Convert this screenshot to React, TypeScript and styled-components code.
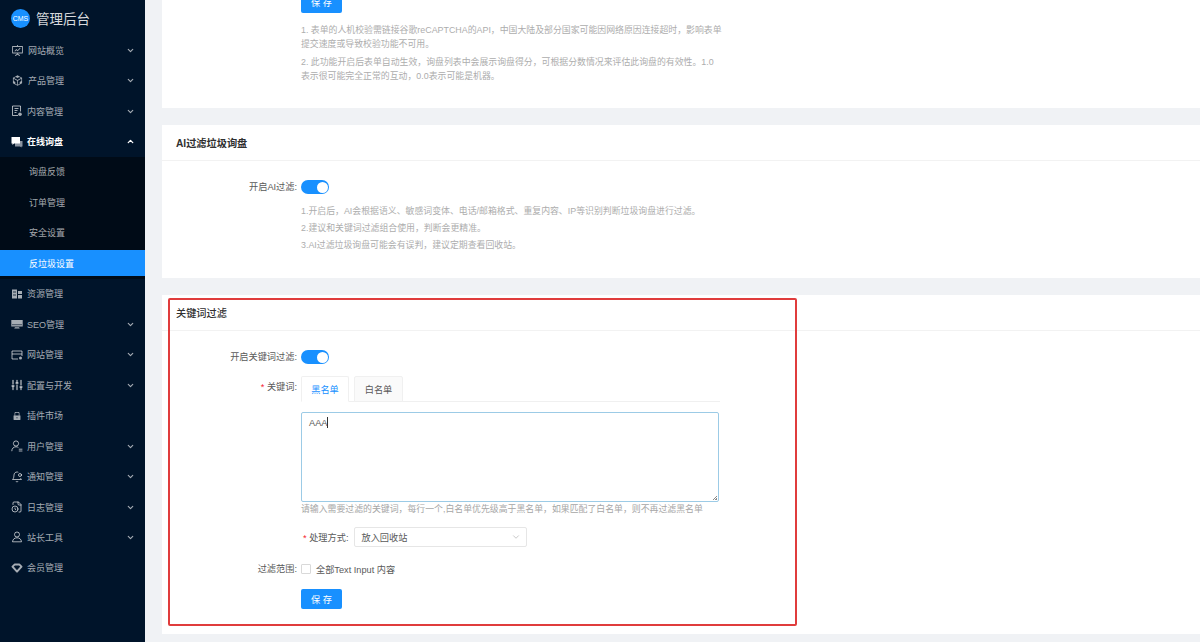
import React from 'react';
import styled, { createGlobalStyle } from 'styled-components';
import { AiFillLock, AiOutlineCodeSandbox, AiOutlineFundProjectionScreen } from 'react-icons/ai';
import { LuBellDot, LuChevronDown, LuChevronUp, LuFileClock, LuSlidersVertical } from 'react-icons/lu';

const GlobalStyle = createGlobalStyle`
  html, body {
    margin: 0;
    height: 642px;
    overflow: hidden;
    background: #f0f2f5;
    font-family: "Liberation Sans", "Noto Sans CJK SC", sans-serif;
    font-size: 9.2px;
    color: #595959;
  }
  * { box-sizing: border-box; }
`;

const Layout = styled.div`
  display: flex;
  width: 1200px;
  height: 642px;
  overflow: hidden;
  position: relative;
`;

const Sidebar = styled.aside`
  flex: 0 0 145px;
  background: #00142a;
  color: rgba(255, 255, 255, .65);
`;

const Logo = styled.div`
  display: flex;
  align-items: center;
  gap: 6px;
  height: 35px;
  padding: 1px 0 0 11px;
  color: rgba(255, 255, 255, .85);
  font-size: 13.5px;
`;

const LogoMark = styled.span`
  width: 19px;
  height: 19px;
  border-radius: 50%;
  background: #1890ff;
  color: #fff;
  font-size: 7px;
  display: flex;
  align-items: center;
  justify-content: center;
`;

const Menu = styled.nav`
  display: flex;
  flex-direction: column;
`;

const MenuItem = styled.div<{ $open?: boolean }>`
  height: 30.45px;
  display: flex;
  align-items: center;
  padding: 0 10px 0 11px;
  gap: 4px;
  font-size: 9px;
  color: ${p => (p.$open ? '#fff' : 'rgba(255, 255, 255, .65)')};
  font-weight: ${p => (p.$open ? 700 : 400)};
`;

const IconBox = styled.span`
  flex: 0 0 12px;
  height: 12px;
  display: flex;
  align-items: center;
  justify-content: center;
`;

const ItemLabel = styled.span`
  flex: 1;
`;

const SubMenu = styled.div`
  background: #000b17;
  display: flex;
  flex-direction: column;
  height: 122px;
`;

const SubItem = styled.div<{ $active?: boolean }>`
  height: 25.4px;
  margin: 2.5px 0;
  padding-left: 29px;
  display: flex;
  align-items: center;
  font-size: 9px;
  background: ${p => (p.$active ? '#1890ff' : 'transparent')};
  color: ${p => (p.$active ? '#fff' : 'rgba(255, 255, 255, .65)')};
`;

const Main = styled.main`
  flex: 1;
  padding: 0 0 0 17px;
  display: flex;
  flex-direction: column;
  gap: 17px;
  overflow: hidden;
`;

const Card = styled.section<{ $height: number }>`
  flex: 0 0 ${p => p.$height}px;
  background: #fff;
`;

const CardHead = styled.h2<{ $weight: number }>`
  margin: 0;
  height: 36px;
  padding: 0 14px;
  display: flex;
  align-items: center;
  font-size: 10.2px;
  font-weight: ${p => p.$weight};
  color: #303030;
  border-bottom: 1px solid #f2f2f2;
`;

const CardBody = styled.div`
  padding: 19px 0 0;
`;

const TopBody = styled.div`
  margin-top: -8px;
  padding-left: 139px;
`;

const FormRow = styled.div<{ $mt?: number; $top?: boolean }>`
  display: flex;
  align-items: ${p => (p.$top ? 'flex-start' : 'center')};
  margin-top: ${p => p.$mt ?? 0}px;
`;

const Label = styled.label<{ $required?: boolean; $pt?: number }>`
  flex: 0 0 139px;
  padding: ${p => p.$pt ?? 0}px 4px 0 0;
  text-align: right;
  line-height: 14px;
  &::before {
    content: ${p => (p.$required ? '"* "' : 'none')};
    color: #f5222d;
  }
`;

const Control = styled.div`
  flex: 1;
  min-width: 0;
`;

const Switch = styled.span`
  display: block;
  width: 28px;
  height: 14px;
  border-radius: 7px;
  background: #1890ff;
  position: relative;
  &::after {
    content: '';
    position: absolute;
    top: 1.5px;
    right: 1.5px;
    width: 11px;
    height: 11px;
    border-radius: 50%;
    background: #fff;
  }
`;

const Button = styled.button<{ $height: number }>`
  display: block;
  width: 41px;
  height: ${p => p.$height}px;
  padding: 0;
  border: 0;
  border-radius: 2px;
  background: #1890ff;
  color: #fff;
  font: inherit;
`;

const Note = styled.p<{ $lh: number; $mt: number; $width?: number }>`
  margin: ${p => p.$mt}px 0 0 139px;
  width: ${p => p.$width ?? 420}px;
  font-size: 8.9px;
  line-height: ${p => p.$lh}px;
  color: #adadad;
`;

const Tabs = styled.div`
  display: flex;
  gap: 5px;
  width: 419px;
  height: 26px;
  border-bottom: 1px solid #f0f0f0;
`;

const Tab = styled.div<{ $active?: boolean }>`
  width: ${p => (p.$active ? 48 : 49)}px;
  height: 26px;
  display: flex;
  align-items: center;
  justify-content: center;
  border: 1px solid #f0f0f0;
  border-bottom-color: ${p => (p.$active ? '#fff' : '#f0f0f0')};
  border-radius: 2px 2px 0 0;
  background: ${p => (p.$active ? '#fff' : '#fafafa')};
  color: ${p => (p.$active ? '#1890ff' : '#595959')};
`;

const Indented = styled.div`
  margin-left: 139px;
`;

const TextArea = styled.div`
  width: 418px;
  height: 90px;
  margin-top: 10px;
  padding: 3px 7px;
  border: 1px solid #9ccbe6;
  border-radius: 2px;
  line-height: 15px;
  color: #595959;
  position: relative;
`;

const Caret = styled.span`
  display: inline-block;
  width: 1px;
  height: 11px;
  background: #333;
  vertical-align: -2px;
`;

const Grip = styled.span`
  position: absolute;
  right: 1px;
  bottom: 1px;
  width: 6px;
  height: 6px;
  background: repeating-linear-gradient(135deg, transparent 0 1px, #8c8c8c 1px 2px);
  clip-path: polygon(100% 0, 100% 100%, 0 100%);
`;

const Help = styled.div`
  margin-top: 1px;
  font-size: 8.9px;
  line-height: 12px;
  color: #a6a6a6;
`;

const ModeRow = styled.div`
  display: flex;
  align-items: center;
  margin: 12px 0 0 2px;
`;

const InlineLabel = styled.span`
  flex: 0 0 50.5px;
  &::before {
    content: '* ';
    color: #f5222d;
  }
`;

const Select = styled.div`
  width: 173.5px;
  height: 20px;
  padding: 0 5px 0 7px;
  display: flex;
  align-items: center;
  justify-content: space-between;
  border: 1px solid #e6e6e6;
  border-radius: 2px;
  svg { color: #bfbfbf; }
`;

const Check = styled.span`
  display: inline-block;
  width: 10px;
  height: 10px;
  margin-right: 5px;
  border: 1px solid #d9d9d9;
  border-radius: 1px;
  vertical-align: -1px;
`;

const Highlight = styled.div`
  position: absolute;
  left: 168px;
  top: 298px;
  width: 629px;
  height: 328px;
  border: 2px solid #e03c3c;
  border-radius: 2px;
  pointer-events: none;
`;

const Glyph = ({ children }: { children: React.ReactNode }) => (
  <svg width="12" height="12" viewBox="0 0 12 12" fill="none" stroke="currentColor" strokeWidth="1">
    {children}
  </svg>
);

const ContentIcon = () => (
  <Glyph>
    <path d="M7 10.5H1.5v-9.5h8v5.5M3.5 3.5h4M3.5 5.5h3M3.5 7.5h2" />
    <circle cx="9" cy="9.2" r="1.8" fill="currentColor" stroke="none" />
  </Glyph>
);

const ChatIcon = () => (
  <Glyph>
    <path d="M4 5h7.5v5.5h-1v1l-1.5-1H4z" fill="#8a93a0" stroke="none" />
    <path d="M.5 1h8.5v6.5H3L1.5 9V7.5h-1z" fill="#fff" stroke="none" />
  </Glyph>
);

const ResourceIcon = () => (
  <Glyph>
    <path d="M1 1.5h5v9H1zM7 3h4v3H7zM7 7h4v3.5H7z" fill="currentColor" stroke="none" />
    <path d="M2 4h3M2 7h3" stroke="#00142a" strokeWidth=".8" />
  </Glyph>
);

const SeoIcon = () => (
  <Glyph>
    <path d="M.3 2h11.4v6.5H.3zM4 9.2h4l.8 1.3H3.2z" fill="currentColor" stroke="none" />
    <path d="M1 6.7h10" stroke="#00142a" strokeWidth=".6" />
  </Glyph>
);

const WindowIcon = () => (
  <Glyph>
    <path d="M7 10H1V2h10v5M1 5h10" />
    <circle cx="9.5" cy="9" r="1.5" fill="currentColor" stroke="none" />
  </Glyph>
);

const UserLinesIcon = () => (
  <Glyph>
    <circle cx="5" cy="3.5" r="2.6" />
    <path d="M.8 11.2c0-2.6 1.6-4.4 4.2-4.4 1 0 1.8.2 2.4.7M7.8 9.2h3.6M7.8 11h3.6" />
  </Glyph>
);

const ToolUserIcon = () => (
  <Glyph>
    <circle cx="6" cy="3.5" r="2.5" />
    <path d="M1.5 10.8c.3-2.6 2-4 4.5-4s4.2 1.4 4.5 4z" />
  </Glyph>
);

const MemberIcon = () => (
  <Glyph>
    <path d="M1.5 4.6 3.8 2.4h4.4l2.3 2.2L6 9.6z" strokeWidth="2" strokeLinejoin="round" />
  </Glyph>
);

type NavEntry = { label: string; icon: React.ReactNode; arrow?: boolean };

const navTop: NavEntry[] = [
  { label: '网站概览', icon: <AiOutlineFundProjectionScreen size={13} />, arrow: true },
  { label: '产品管理', icon: <AiOutlineCodeSandbox size={13} />, arrow: true },
  { label: '内容管理', icon: <ContentIcon />, arrow: true },
];

const navBottom: NavEntry[] = [
  { label: '资源管理', icon: <ResourceIcon /> },
  { label: 'SEO管理', icon: <SeoIcon />, arrow: true },
  { label: '网站管理', icon: <WindowIcon />, arrow: true },
  { label: '配置与开发', icon: <LuSlidersVertical size={12} strokeWidth={2.8} />, arrow: true },
  { label: '插件市场', icon: <AiFillLock size={10} /> },
  { label: '用户管理', icon: <UserLinesIcon />, arrow: true },
  { label: '通知管理', icon: <LuBellDot size={12} />, arrow: true },
  { label: '日志管理', icon: <LuFileClock size={12} />, arrow: true },
  { label: '站长工具', icon: <ToolUserIcon />, arrow: true },
  { label: '会员管理', icon: <MemberIcon /> },
];

const NavRow = ({ entry }: { entry: NavEntry }) => (
  <MenuItem>
    <IconBox>{entry.icon}</IconBox>
    <ItemLabel>{entry.label}</ItemLabel>
    {entry.arrow && <LuChevronDown size={9} strokeWidth={3} />}
  </MenuItem>
);

export default function App() {
  return (
    <Layout>
      <GlobalStyle />
      <Sidebar>
        <Logo>
          <LogoMark>CMS</LogoMark>
          管理后台
        </Logo>
        <Menu>
          {navTop.map(entry => <NavRow key={entry.label} entry={entry} />)}
          <MenuItem $open>
            <IconBox><ChatIcon /></IconBox>
            <ItemLabel>在线询盘</ItemLabel>
            <LuChevronUp size={9} strokeWidth={3.5} />
          </MenuItem>
          <SubMenu>
            <SubItem>询盘反馈</SubItem>
            <SubItem>订单管理</SubItem>
            <SubItem>安全设置</SubItem>
            <SubItem $active>反垃圾设置</SubItem>
          </SubMenu>
          {navBottom.map(entry => <NavRow key={entry.label} entry={entry} />)}
        </Menu>
      </Sidebar>
      <Main>
        <Card $height={108}>
          <TopBody>
            <Button $height={20.5}>保 存</Button>
          </TopBody>
          <Note $lh={14} $mt={10.5} $width={426}>
            1. 表单的人机校验需链接谷歌reCAPTCHA的API，中国大陆及部分国家可能因网络原因连接超时，影响表单提交速度或导致校验功能不可用。
          </Note>
          <Note $lh={14} $mt={4}>
            2. 此功能开启后表单自动生效，询盘列表中会展示询盘得分，可根据分数情况来评估此询盘的有效性。1.0表示很可能完全正常的互动，0.0表示可能是机器。
          </Note>
        </Card>
        <Card $height={153}>
          <CardHead $weight={700}>AI过滤垃圾询盘</CardHead>
          <CardBody>
            <FormRow>
              <Label>开启AI过滤:</Label>
              <Control><Switch /></Control>
            </FormRow>
            <Note $lh={17} $mt={9}>1.开启后，AI会根据语义、敏感词变体、电话/邮箱格式、重复内容、IP等识别判断垃圾询盘进行过滤。</Note>
            <Note $lh={17} $mt={0}>2.建议和关键词过滤组合使用，判断会更精准。</Note>
            <Note $lh={17} $mt={0}>3.AI过滤垃圾询盘可能会有误判，建议定期查看回收站。</Note>
          </CardBody>
        </Card>
        <Card $height={339}>
          <CardHead $weight={500}>关键词过滤</CardHead>
          <CardBody>
            <FormRow>
              <Label>开启关键词过滤:</Label>
              <Control><Switch /></Control>
            </FormRow>
            <FormRow $mt={12} $top>
              <Label $required $pt={4}>关键词:</Label>
              <Control>
                <Tabs>
                  <Tab $active>黑名单</Tab>
                  <Tab>白名单</Tab>
                </Tabs>
              </Control>
            </FormRow>
            <Indented>
              <TextArea>AAA<Caret /><Grip /></TextArea>
              <Help>请输入需要过滤的关键词，每行一个,白名单优先级高于黑名单，如果匹配了白名单，则不再过滤黑名单</Help>
              <ModeRow>
                <InlineLabel>处理方式:</InlineLabel>
                <Select>放入回收站<LuChevronDown size={10} /></Select>
              </ModeRow>
            </Indented>
            <FormRow $mt={15}>
              <Label>过滤范围:</Label>
              <Control><Check />全部Text Input 内容</Control>
            </FormRow>
            <FormRow $mt={13}>
              <Label />
              <Control><Button $height={20}>保 存</Button></Control>
            </FormRow>
          </CardBody>
        </Card>
      </Main>
      <Highlight />
    </Layout>
  );
}
